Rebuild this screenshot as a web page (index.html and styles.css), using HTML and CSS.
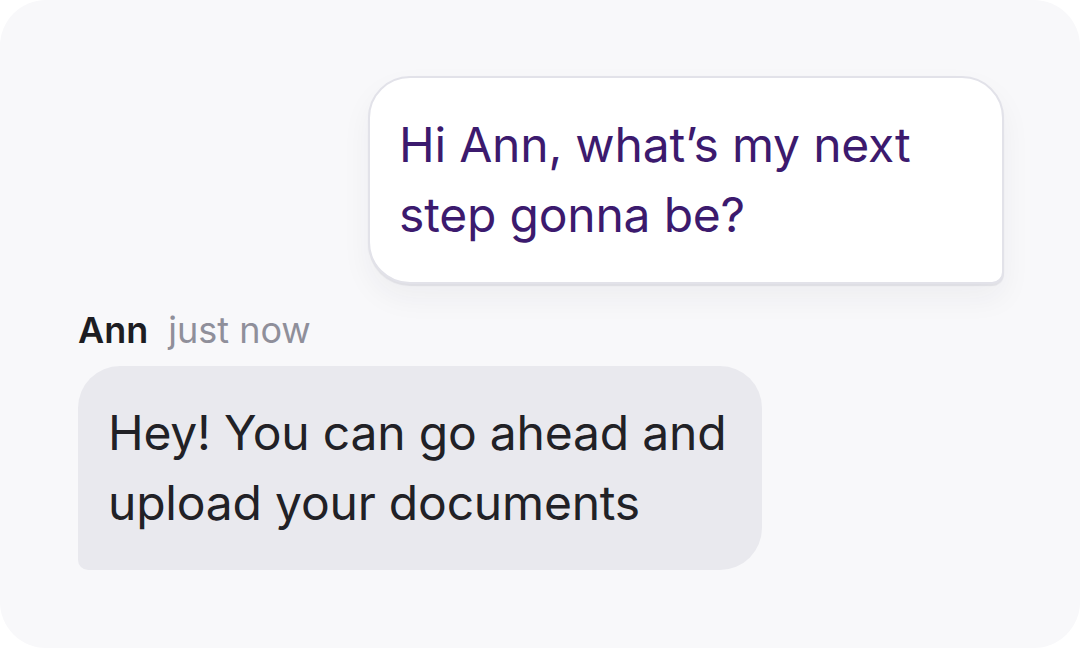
FILE: index.html
```html
<!DOCTYPE html>
<html>
<head>
    <link rel="stylesheet" href="styles.css">
</head>
<body>
    <div class="chat">
        <div class="msg-row mine">
            <div class="bubble bubble-mine">Hi Ann, what’s my next step gonna be?</div>
        </div>

        <div class="msg-group">
            <div class="meta">
                <span class="name">Ann</span>
                <span class="time">just now</span>
            </div>
            <div class="bubble bubble-theirs">Hey! You can go ahead and upload your documents</div>
        </div>
    </div>
</body>
</html>
```

FILE: styles.css
```css
body {
    margin: 0;
    background: #ffffff;
    font-family: Inter, "Noto Sans", Arial, sans-serif;
}
.chat {
    box-sizing: border-box;
    width: 1080px;
    height: 648px;
    background: #f8f8fa;
    border-radius: 46px;
    padding: 76px 76px 0 78px;
    display: flex;
    flex-direction: column;
}
.msg-row {
    display: flex;
}
.msg-row.mine {
    justify-content: flex-end;
}
.bubble {
    box-sizing: border-box;
    font-size: 48px;
    line-height: 70px;
    letter-spacing: -0.2px;
    padding: 32px;
}
.bubble-mine {
    width: 636px;
    background: #ffffff;
    color: #3c1a6e;
    border: 2px solid #e2e2e9;
    border-radius: 42px 42px 12px 42px;
    padding-left: 29px;
    box-shadow: 0 2px 1px rgba(30, 30, 60, 0.08), 0 14px 30px rgba(30, 30, 60, 0.05);
}
.msg-group {
    margin-top: 24px;
}
.meta {
    display: flex;
    align-items: baseline;
    gap: 20px;
    font-size: 36px;
    line-height: 44px;
}
.name {
    font-weight: 600;
    color: #1d1d22;
}
.time {
    color: #8f8f9a;
}
.bubble-theirs {
    margin-top: 14px;
    width: 684px;
    background: #e9e9ee;
    color: #212126;
    border-radius: 42px 42px 42px 10px;
    padding-left: 30px;
    padding-right: 20px;
}
```
